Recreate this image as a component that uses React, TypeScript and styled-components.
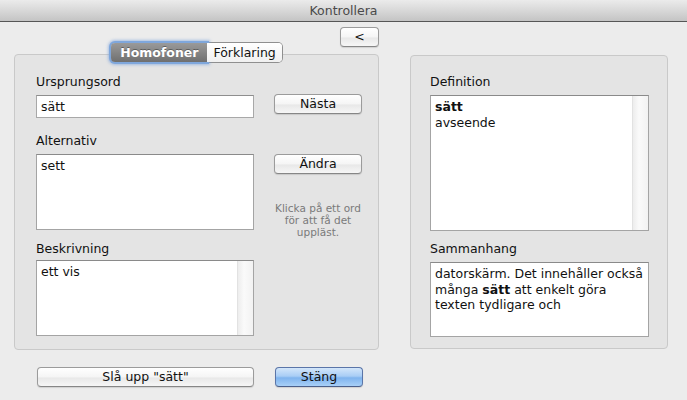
import React from 'react';
import styled, { createGlobalStyle } from 'styled-components';

const GlobalStyle = createGlobalStyle`
  html, body {
    margin: 0;
    padding: 0;
    background: #ececec;
  }
  body {
    font-family: 'DejaVu Sans', 'Noto Sans', sans-serif;
    font-size: 12px;
    color: #111;
  }
`;

const App = () => {
  return (
    <Window>
      <GlobalStyle />
      <TitleBar>Kontrollera</TitleBar>
      <Body>
        <LeftCol>
          <BackRow>
            <Button width={39}>&lt;</Button>
          </BackRow>
          <GroupBox height={296}>
            <Segmented>
              <Segment active>Homofoner</Segment>
              <Segment>Förklaring</Segment>
            </Segmented>
            <Pane>
              <FieldCol>
                <Label>Ursprungsord</Label>
                <TextField>sätt</TextField>
                <Label gap={16}>Alternativ</Label>
                <TextBox height={76}>sett</TextBox>
                <Label gap={12} below={4}>
                  Beskrivning
                </Label>
                <TextBox height={76} scroll>
                  ett vis
                </TextBox>
              </FieldCol>
              <ActionCol>
                <Button width={88} top={19}>
                  Nästa
                </Button>
                <Button width={88} top={40}>
                  Ändra
                </Button>
                <Hint>
                  Klicka på ett ord
                  <br />
                  för att få det
                  <br />
                  uppläst.
                </Hint>
              </ActionCol>
            </Pane>
          </GroupBox>
        </LeftCol>
        <RightCol>
          <GroupBox height={294}>
            <RightPane>
              <Label>Definition</Label>
              <TextBox height={136} scroll>
                <b>sätt</b>
                <br />
                avseende
              </TextBox>
              <Label gap={11}>Sammanhang</Label>
              <TextBox height={75}>
                datorskärm. Det innehåller också
                <br />
                många <b>sätt</b> att enkelt göra
                <br />
                texten tydligare och
              </TextBox>
            </RightPane>
          </GroupBox>
        </RightCol>
      </Body>
      <Footer>
        <Button width={217}>Slå upp "sätt"</Button>
        <Button width={88} primary>
          Stäng
        </Button>
      </Footer>
    </Window>
  );
};

export default App;

const Window = styled.div`
  width: 687px;
  height: 400px;
  background: #ececec;
  overflow: hidden;
`;

const TitleBar = styled.div`
  height: 21px;
  line-height: 22px;
  text-align: center;
  font-size: 12.5px;
  color: #4a4a4a;
  background: linear-gradient(#ebebeb, #d6d6d6 55%, #c4c4c4);
  border-bottom: 1px solid #565656;
`;

const Body = styled.div`
  display: flex;
  align-items: flex-start;
  padding-left: 14px;
  gap: 31px;
`;

const LeftCol = styled.div`
  width: 365px;
  display: flex;
  flex-direction: column;
`;

const BackRow = styled.div`
  display: flex;
  justify-content: flex-end;
  margin-top: 5px;
  margin-bottom: 7px;
`;

const RightCol = styled.div`
  width: 258px;
  margin-top: 33px;
`;

const GroupBox = styled.div<{ height: number }>`
  box-sizing: border-box;
  height: ${(p) => p.height}px;
  background: #e4e4e4;
  border: 1px solid #c9c9c9;
  border-radius: 4px;
  display: flex;
  flex-direction: column;
`;

const Segmented = styled.div`
  align-self: center;
  display: flex;
  margin-top: -12px;
  height: 19px;
  border-radius: 4px;
  box-shadow: 0 0 0 1px #8f8f8f;
  background: #fff;
`;

const Segment = styled.div<{ active?: boolean }>`
  box-sizing: border-box;
  height: 19px;
  line-height: 19px;
  padding: 0 ${(p) => (p.active ? 9 : 6)}px;
  font-size: 12.5px;
  font-weight: ${(p) => (p.active ? 'bold' : 'normal')};
  color: ${(p) => (p.active ? '#fff' : '#111')};
  background: ${(p) =>
    p.active ? 'linear-gradient(#9a9a9a, #6f6f6f)' : 'linear-gradient(#ffffff, #f0f0f0)'};
  border-radius: ${(p) => (p.active ? '4px 0 0 4px' : '0 4px 4px 0')};
  box-shadow: ${(p) => (p.active ? '0 0 0 2px #7fa7dc, 0 0 3px 3px rgba(120,160,220,0.6)' : 'none')};
  text-shadow: ${(p) => (p.active ? '0 -1px 0 rgba(0,0,0,0.35)' : 'none')};
`;

const Pane = styled.div`
  display: flex;
  gap: 20px;
  padding: 13px 0 0 21px;
`;

const FieldCol = styled.div`
  width: 218px;
  display: flex;
  flex-direction: column;
`;

const ActionCol = styled.div`
  width: 88px;
  display: flex;
  flex-direction: column;
  align-items: center;
`;

const RightPane = styled.div`
  display: flex;
  flex-direction: column;
  padding: 19px 0 0 19px;
  width: 219px;
`;

const Label = styled.div<{ gap?: number; below?: number }>`
  height: 14px;
  line-height: 14px;
  font-size: 12.5px;
  margin-top: ${(p) => p.gap ?? 0}px;
  margin-bottom: ${(p) => p.below ?? 6}px;
  color: #111;
`;

const TextField = styled.div`
  box-sizing: border-box;
  height: 23px;
  line-height: 21px;
  padding-left: 4px;
  background: #fff;
  border: 1px solid #a8a8a8;
  border-top-color: #8e8e8e;
  font-size: 12.5px;
`;

const TextBox = styled.div<{ height: number; scroll?: boolean }>`
  box-sizing: border-box;
  height: ${(p) => p.height}px;
  background: #fff;
  border: 1px solid #a4a4a4;
  border-top-color: #8a8a8a;
  padding: 3px ${(p) => (p.scroll ? 20 : 4)}px 0 4px;
  line-height: 15.5px;
  font-size: 12.5px;
  white-space: nowrap;
  position: relative;
  ${(p) =>
    p.scroll &&
    `&::after {
      content: '';
      position: absolute;
      top: 0;
      right: 0;
      bottom: 0;
      width: 15px;
      background: linear-gradient(90deg, #ededed, #fafafa 40%, #f2f2f2);
      border-left: 1px solid #e2e2e2;
    }`}
`;

const Button = styled.div<{ width: number; top?: number; primary?: boolean }>`
  box-sizing: border-box;
  width: ${(p) => p.width}px;
  height: 20px;
  line-height: 18px;
  margin-top: ${(p) => p.top ?? 0}px;
  text-align: center;
  font-size: 12.5px;
  color: #111;
  border-radius: 4px;
  border: 1px solid ${(p) => (p.primary ? '#5a75a8' : '#9b9b9b')};
  border-bottom-color: ${(p) => (p.primary ? '#4a5f8a' : '#868686')};
  background: ${(p) =>
    p.primary
      ? 'linear-gradient(#d3e6fa, #a9cdf5 45%, #7fb3ee 55%, #a8d0f7)'
      : 'linear-gradient(#ffffff, #f5f5f5 50%, #e8e8e8 55%, #f6f6f6)'};
  box-shadow: 0 1px 1px rgba(0, 0, 0, 0.12);
`;

const Hint = styled.div`
  margin-top: 28px;
  font-size: 10.5px;
  line-height: 12px;
  color: #7a7a7a;
  text-align: center;
  white-space: nowrap;
`;

const Footer = styled.div`
  display: flex;
  gap: 21px;
  padding: 17px 0 0 37px;
`;
